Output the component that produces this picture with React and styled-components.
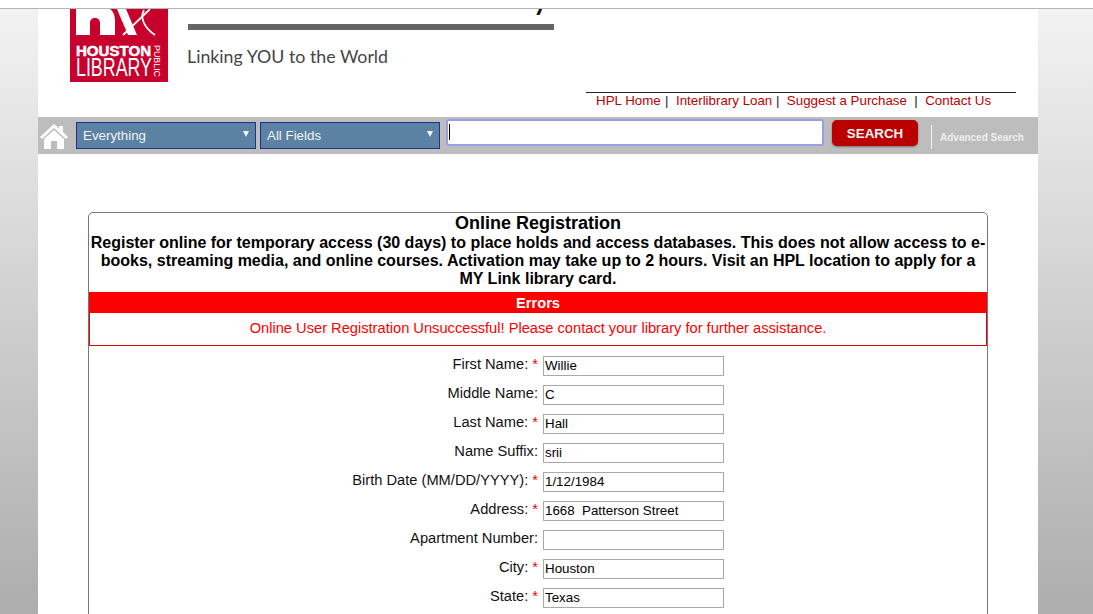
import React from "react";
import styled, { createGlobalStyle } from "styled-components";

const Global = createGlobalStyle`
  html, body { margin: 0; padding: 0; height: 100%; overflow: hidden; background: #fff; }
  body { font-family: "Liberation Sans", Arial, sans-serif; }
  * { box-sizing: border-box; }
`;
const TopStrip = styled.div`
  height: 9px;
  background: #fff;
  border-bottom: 1px solid #b4b4b4;
`;
const Backdrop = styled.div`
  height: 605px;
  overflow: hidden;
  padding: 0 55px 0 38px;
  background: linear-gradient(to bottom, #f2f2f2 0%, #adadad 100%);
`;
const Page = styled.div`
  width: 1000px;
  height: 605px;
  background: #fff;
  overflow: hidden;
`;
const Masthead = styled.header`
  height: 108px;
  display: flex;
  align-items: flex-start;
  padding-left: 32px;
  position: relative;
`;
const Logo = styled.svg`
  width: 98px;
  height: 73px;
  flex: none;
  display: block;
`;
const LogoText = styled.text`
  font-family: "Liberation Sans", Arial, sans-serif;
  fill: #fff;
`;
const Brand = styled.div`
  margin-left: 20px;
  width: 366px;
`;
const SiteTitle = styled.div`
  height: 15px;
  margin-top: -40px;
  font-family: Lato, sans-serif;
  font-size: 36.2px;
  line-height: 53px;
  color: #111;
  white-space: nowrap;
`;
const Rule = styled.div`
  height: 6px;
  width: 366px;
  margin-top: 40px;
  background: #646464;
`;
const Tagline = styled.div`
  font-family: Lato, sans-serif;
  font-size: 17.8px;
  line-height: 24px;
  color: #444;
  margin: 14px 0 0 -1px;
  white-space: nowrap;
`;
const TopLinks = styled.nav`
  position: absolute;
  left: 548px;
  top: 83px;
  width: 430px;
  border-top: 1px solid #222;
  padding: 0 0 0 10px;
  font-size: 13.33px;
  line-height: 15px;
  white-space: pre;
  color: #222;
`;
const TopLink = styled.a`
  color: #bb0000;
  text-decoration: none;
  margin-right: ${(p) => p.$mr || 0}px;
`;
const SearchBar = styled.div`
  height: 37px;
  background: #bdbdbd;
  display: flex;
  align-items: flex-start;
`;
const HomeIcon = styled.svg`
  width: 30px;
  height: 26px;
  margin: 6px 0 0 1px;
  flex: none;
`;
const FakeSelect = styled.div`
  width: 180px;
  height: 27px;
  margin: 5px 0 0 ${(p) => p.$ml}px;
  padding: 0 6px;
  background: #5b82a3;
  border: 1px solid #22308f;
  color: #f2f2f2;
  font-size: 13.33px;
  line-height: 25px;
  display: flex;
  justify-content: space-between;
  align-items: center;
  flex: none;
`;
const Caret = styled.span`
  width: 0;
  height: 0;
  border-left: 3px solid transparent;
  border-right: 3px solid transparent;
  border-top: 6px solid #f4f4f4;
  margin: -3px 0 0 0;
`;
const SearchInput = styled.div`
  width: 378px;
  height: 27px;
  margin: 2px 0 0 6px;
  background: #fff;
  border: 2px solid #9a9ee6;
  border-radius: 3px;
  padding: 3px 0 0 1px;
  flex: none;
`;
const Cursor = styled.div`
  width: 1px;
  height: 16px;
  background: #000;
`;
const SearchButton = styled.div`
  width: 86px;
  height: 26px;
  margin: 3px 0 0 8px;
  background: #bb0000;
  border-radius: 5px;
  box-shadow: 0 1px 2px rgba(0,0,0,.4);
  color: #f6f6f6;
  font-size: 13.33px;
  font-weight: 700;
  line-height: 27px;
  text-align: center;
  flex: none;
`;
const Advanced = styled.div`
  margin: 8px 0 0 13px;
  height: 24px;
  border-left: 1px solid #f2f2f2;
  padding: 5px 0 0 8px;
  color: #efefef;
  font-size: 10px;
  font-weight: 700;
  line-height: 15px;
  white-space: nowrap;
`;
const Card = styled.section`
  margin: 58px 0 0 50px;
  width: 900px;
  height: 500px;
  border: 1px solid #777;
  border-radius: 5px 5px 0 0;
  background: #fff;
`;
const Heading = styled.h1`
  margin: 0;
  font-size: 18px;
  line-height: 21px;
  font-weight: 700;
  text-align: center;
  color: #000;
`;
const Intro = styled.p`
  margin: 0 0 4px;
  font-size: 16px;
  line-height: 18px;
  font-weight: 700;
  text-align: center;
  color: #000;
`;
const ErrorTitle = styled.div`
  height: 21px;
  background: #ff0000;
  color: #fff;
  font-size: 14.67px;
  font-weight: 700;
  line-height: 22px;
  text-align: center;
`;
const ErrorBody = styled.div`
  height: 33px;
  border: 1px solid #e80000;
  border-top: 0;
  color: #ff0000;
  font-size: 14.67px;
  line-height: 30px;
  text-align: center;
`;
const Form = styled.div`
  padding-top: 10px;
  display: flex;
  flex-direction: column;
  gap: 9px;
`;
const Row = styled.div`
  display: flex;
  height: 20px;
`;
const Label = styled.div`
  width: 449px;
  text-align: right;
  font-size: 14.67px;
  line-height: 16px;
  color: #111;
  white-space: pre;
`;
const Star = styled.span`
  color: #f00000;
`;
const Field = styled.div`
  width: 181px;
  height: 20px;
  margin-left: 5px;
  border: 1px solid #a9a9a9;
  padding: 0 1px;
  font-size: 13.33px;
  line-height: 17px;
  color: #000;
  white-space: pre;
`;

const rows = [
  ["First Name:", true, "Willie"],
  ["Middle Name:", false, "C"],
  ["Last Name:", true, "Hall"],
  ["Name Suffix:", false, "srii"],
  ["Birth Date (MM/DD/YYYY):", true, "1/12/1984"],
  ["Address:", true, "1668  Patterson Street"],
  ["Apartment Number:", false, ""],
  ["City:", true, "Houston"],
  ["State:", true, "Texas"],
];

export default function App() {
  return (
    <>
      <Global />
      <TopStrip />
      <Backdrop>
        <Page>
          <Masthead>
            <Logo viewBox="0 0 98 73">
              <rect width="98" height="73" fill="#c8002d" />
              <path d="M6 0V26h14V14c0-3 2-5 5-5s5 2 5 5v12h15V12C45 6 43 2 40 0z" fill="#fff" />
              <path d="M47 0h9l11 26h-9z" fill="#fff" />
              <path d="M80 0L53 26" fill="none" stroke="#fff" strokeWidth="1.8" />
              <path d="M74 1c-5 9 2 19 11 25" fill="none" stroke="#fff" strokeWidth="1.8" />
              <LogoText x="6" y="46.5" fontSize="14" fontWeight="700" stroke="#fff" strokeWidth=".5" textLength="75" lengthAdjust="spacingAndGlyphs">HOUSTON</LogoText>
              <LogoText x="6" y="67" fontSize="26" textLength="76" lengthAdjust="spacingAndGlyphs">LIBRARY</LogoText>
              <LogoText fontSize="9" transform="translate(84 36) rotate(90)" textLength="32" lengthAdjust="spacingAndGlyphs">PUBLIC</LogoText>
            </Logo>
            <Brand>
              <SiteTitle>Houston Public Library</SiteTitle>
              <Rule />
              <Tagline>Linking YOU to the World</Tagline>
            </Brand>
            <TopLinks>
              <TopLink $mr={0.7}>HPL Home</TopLink>{" |  "}
              <TopLink>Interlibrary Loan</TopLink>{" |  "}
              <TopLink>Suggest a Purchase</TopLink>{"  |  "}
              <TopLink>Contact Us</TopLink>
            </TopLinks>
          </Masthead>
          <SearchBar>
            <HomeIcon viewBox="0 0 30 26">
              <path d="M15 1L1 14l2 2L15 5l12 11 2-2-5-5V3h-4v2.5z" fill="#fff" />
              <path d="M5 16L15 7l10 9v10h-7v-8h-6v8H5z" fill="#fff" />
            </HomeIcon>
            <FakeSelect $ml={7}>Everything<Caret /></FakeSelect>
            <FakeSelect $ml={4}>All Fields<Caret /></FakeSelect>
            <SearchInput><Cursor /></SearchInput>
            <SearchButton>SEARCH</SearchButton>
            <Advanced>Advanced Search</Advanced>
          </SearchBar>
          <Card>
            <Heading>Online Registration</Heading>
            <Intro>Register online for temporary access (30 days) to place holds and access databases. This does not allow access to e-books, streaming media, and online courses. Activation may take up to 2 hours. Visit an HPL location to apply for a MY Link library card.</Intro>
            <ErrorTitle>Errors</ErrorTitle>
            <ErrorBody>Online User Registration Unsuccessful! Please contact your library for further assistance.</ErrorBody>
            <Form>
              {rows.map(([label, req, value]) => (
                <Row key={label}>
                  <Label>{label}{req ? <> <Star>*</Star></> : null}</Label>
                  <Field>{value}</Field>
                </Row>
              ))}
            </Form>
          </Card>
        </Page>
      </Backdrop>
    </>
  );
}
